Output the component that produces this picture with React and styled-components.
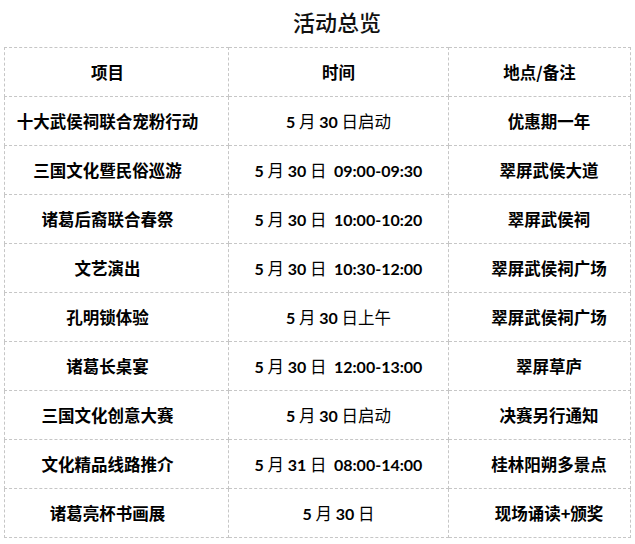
import React from "react";
import styled, { createGlobalStyle } from "styled-components";

const rows = [
  ["十大武侯祠联合宠粉行动", "5 月 30 日启动", "优惠期一年"],
  ["三国文化暨民俗巡游", "5 月 30 日  09:00-09:30", "翠屏武侯大道"],
  ["诸葛后裔联合春祭", "5 月 30 日  10:00-10:20", "翠屏武侯祠"],
  ["文艺演出", "5 月 30 日  10:30-12:00", "翠屏武侯祠广场"],
  ["孔明锁体验", "5 月 30 日上午", "翠屏武侯祠广场"],
  ["诸葛长桌宴", "5 月 30 日  12:00-13:00", "翠屏草庐"],
  ["三国文化创意大赛", "5 月 30 日启动", "决赛另行通知"],
  ["文化精品线路推介", "5 月 31 日  08:00-14:00", "桂林阳朔多景点"],
  ["诸葛亮杯书画展", "5 月 30 日", "现场诵读+颁奖"],
];

const TimeText = ({ text }) => {
  // digits are bold latin, the chinese parts stay regular
  const parts = text.split(/([0-9:\-]+)/);
  return (
    <>
      {parts.map((p, i) =>
        /[0-9]/.test(p) ? <Num key={i}>{p}</Num> : <span key={i}>{p}</span>
      )}
    </>
  );
};

const App = () => {
  return (
    <>
      <GlobalStyle />
      <Page>
        <Title>活动总览</Title>
        <Table>
          <colgroup>
            <col style={{ width: 224 }} />
            <col style={{ width: 220 }} />
            <col style={{ width: 182 }} />
          </colgroup>
          <tbody>
            <tr>
              <Cell padRight={18}>项目</Cell>
              <Cell>时间</Cell>
              <Cell>地点/备注</Cell>
            </tr>
            {rows.map((r, i) => (
              <tr key={i}>
                <Cell padRight={18}>{r[0]}</Cell>
                <Cell time>
                  <TimeText text={r[1]} />
                </Cell>
                <Cell padLeft={19}>{r[2]}</Cell>
              </tr>
            ))}
          </tbody>
        </Table>
      </Page>
    </>
  );
};

const GlobalStyle = createGlobalStyle`
  body {
    margin: 0;
    background: #ffffff;
    font-family: "Noto Sans CJK SC", sans-serif;
    color: #000;
  }
`;

const Page = styled.div`
  width: 635px;
  padding: 8px 0 0 4px;
  box-sizing: border-box;
`;

const Title = styled.h1`
  margin: 0 0 12px 0;
  padding-left: 40px;
  width: 626px;
  box-sizing: border-box;
  text-align: center;
  font-size: 22px;
  line-height: 27px;
  font-weight: 500;
  color: #111;
`;

const Table = styled.table`
  width: 626px;
  border-collapse: collapse;
  table-layout: fixed;
`;

const Cell = styled.td`
  height: 48px;
  padding: 0 ${(props) => props.padRight || 0}px 0 ${(props) => props.padLeft || 0}px;
  border: 1px dashed #c6c6c6;
  text-align: center;
  vertical-align: middle;
  font-family: "Noto Sans CJK SC", sans-serif;
  font-size: 16.5px;
  font-weight: ${(props) => (props.time ? 400 : 700)};
  white-space: pre;
  line-height: 20px;
`;

const Num = styled.span`
  font-family: Lato, "Noto Sans CJK SC", sans-serif;
  font-weight: 700;
  font-size: 16px;
`;

export default App;
